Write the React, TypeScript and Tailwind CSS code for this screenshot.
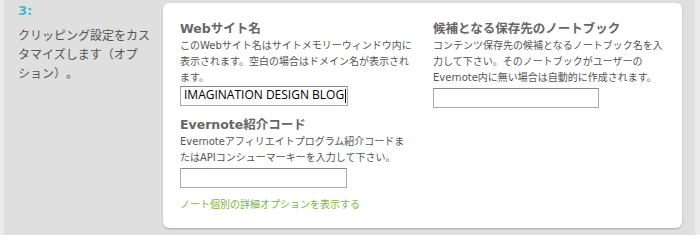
const jp = '"DejaVu Sans", "Noto Sans CJK JP", sans-serif';

const Field = ({
  title,
  lines,
  value,
  inputWidth,
  gap,
}: {
  title: string;
  lines: string[];
  value?: string;
  inputWidth: string;
  gap: string;
}) => (
  <div className="flex flex-col">
    <h3 className="text-[12.5px] font-bold leading-[16px] text-[#666] whitespace-nowrap">{title}</h3>
    <p className="mt-[1px] text-[10px] leading-[16px] text-[#555] whitespace-nowrap">
      {lines.map((l, i) => (
        <span key={i} className="block">
          {l}
        </span>
      ))}
    </p>
    <div
      className={`${gap} h-[20px] ${inputWidth} border border-[#aaa] border-t-[#888] bg-white flex items-center px-[3px]`}
    >
      {value && (
        <span
          className="text-[12px] text-black leading-none whitespace-nowrap"
          style={{ fontFamily: '"Open Sans", sans-serif' }}
        >
          {value}
          <span className="inline-block w-[1px] h-[14px] bg-black align-middle ml-[1px]" />
        </span>
      )}
    </div>
  </div>
);

export default function App() {
  return (
    <div
      className="w-[700px] h-[235px] bg-[#dfdfdf] flex border-l-[4px] border-r-[5px] border-[#ebebeb] overflow-hidden [text-spacing-trim:space-all]"
      style={{ fontFamily: jp }}
    >
      <div className="w-[159px] shrink-0 pl-[14px] pt-[3px]">
        <div className="text-[13px] font-bold text-[#3fb9cc] leading-[16px]">3:</div>
        <p
          className="mt-[6px] text-[12px] leading-[19px] text-[#555] whitespace-nowrap"
          style={{ fontFamily: '"Noto Sans CJK JP", sans-serif' }}
        >
          <span className="block">クリッピング設定をカス</span>
          <span className="block">タマイズします（オプ</span>
          <span className="block">ション）。</span>
        </p>
      </div>
      <div className="mt-[3px] h-[225px] w-[519px] rounded-[6px] bg-white shadow-[0_1px_2px_rgba(0,0,0,0.25)] pl-[17px] pt-[18px]">
        <div className="flex gap-[18px]">
          <div className="w-[235px] flex flex-col">
            <Field
              title="Webサイト名"
              lines={[
                'このWebサイト名はサイトメモリーウィンドウ内に',
                '表示されます。空白の場合はドメイン名が表示され',
                'ます。',
              ]}
              value="IMAGINATION DESIGN BLOG"
              inputWidth="w-[168px]"
              gap="mt-0"
            />
            <div className="mt-[11px]">
              <Field
                title="Evernote紹介コード"
                lines={[
                  'Evernoteアフィリエイトプログラム紹介コードま',
                  'たはAPIコンシューマーキーを入力して下さい。',
                ]}
                inputWidth="w-[167px]"
                gap="mt-[2px]"
              />
            </div>
            <a className="mt-[10px] text-[10px] leading-[14px] text-[#7cb342]">
              ノート個別の詳細オプションを表示する
            </a>
          </div>
          <div className="w-[235px]">
            <Field
              title="候補となる保存先のノートブック"
              lines={[
                'コンテンツ保存先の候補となるノートブック名を入',
                '力して下さい。そのノートブックがユーザーの',
                'Evernote内に無い場合は自動的に作成されます。',
              ]}
              inputWidth="w-[166px]"
              gap="mt-[2px]"
            />
          </div>
        </div>
      </div>
    </div>
  );
}
